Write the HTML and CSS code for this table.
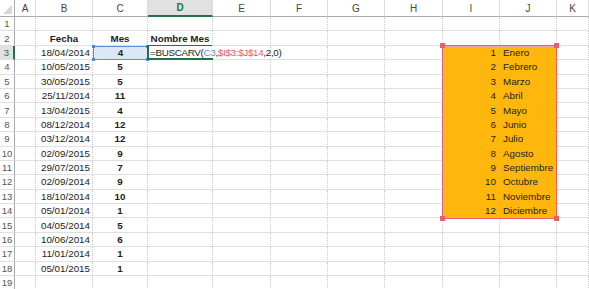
FILE: index.html
```html
<!DOCTYPE html>
<html lang="es">
<head>
<meta charset="utf-8">
<title>BUSCARV</title>
<link rel="stylesheet" href="styles.css">
</head>
<body>
<div class="sheet">
  <div class="c h corner"><svg class="tri" width="9" height="9" viewBox="0 0 9 9"><polygon points="9,0 9,9 0,9" fill="#d6d6d6"/></svg></div>
  <div class="c h">A</div><div class="c h">B</div><div class="c h">C</div><div class="c h hsel">D</div><div class="c h">E</div><div class="c h">F</div><div class="c h">G</div><div class="c h">H</div><div class="c h">I</div><div class="c h">J</div><div class="c h">K</div>

  <div class="c r">1</div><div class="c"></div><div class="c"></div><div class="c"></div><div class="c"></div><div class="c"></div><div class="c"></div><div class="c"></div><div class="c"></div><div class="c"></div><div class="c"></div><div class="c"></div>

  <div class="c r">2</div><div class="c"></div><div class="c ct b">Fecha</div><div class="c ct b">Mes</div><div class="c ct b">Nombre Mes</div><div class="c"></div><div class="c"></div><div class="c"></div><div class="c"></div><div class="c"></div><div class="c"></div><div class="c"></div>

  <div class="c r rsel">3</div><div class="c"></div><div class="c rt">18/04/2014</div><div class="c ct b sel">4<i class="hd tl"></i><i class="hd tr"></i><i class="hd bl"></i><i class="hd br"></i></div><div class="c f"><span class="ftext">=BUSCARV(<span class="ref1">C3</span>,<span class="ref2">$I$3:$J$14</span>,2,0)</span><span class="cursor"></span><i class="fh"></i></div><div class="c"></div><div class="c"></div><div class="c"></div><div class="c"></div><div class="c o rt">1</div><div class="c o">Enero</div><div class="c"></div>

  <div class="c r">4</div><div class="c"></div><div class="c rt">10/05/2015</div><div class="c ct b">5</div><div class="c"></div><div class="c"></div><div class="c"></div><div class="c"></div><div class="c"></div><div class="c o rt">2</div><div class="c o">Febrero</div><div class="c"></div>

  <div class="c r">5</div><div class="c"></div><div class="c rt">30/05/2015</div><div class="c ct b">5</div><div class="c"></div><div class="c"></div><div class="c"></div><div class="c"></div><div class="c"></div><div class="c o rt">3</div><div class="c o">Marzo</div><div class="c"></div>

  <div class="c r">6</div><div class="c"></div><div class="c rt">25/11/2014</div><div class="c ct b">11</div><div class="c"></div><div class="c"></div><div class="c"></div><div class="c"></div><div class="c"></div><div class="c o rt">4</div><div class="c o">Abril</div><div class="c"></div>

  <div class="c r">7</div><div class="c"></div><div class="c rt">13/04/2015</div><div class="c ct b">4</div><div class="c"></div><div class="c"></div><div class="c"></div><div class="c"></div><div class="c"></div><div class="c o rt">5</div><div class="c o">Mayo</div><div class="c"></div>

  <div class="c r">8</div><div class="c"></div><div class="c rt">08/12/2014</div><div class="c ct b">12</div><div class="c"></div><div class="c"></div><div class="c"></div><div class="c"></div><div class="c"></div><div class="c o rt">6</div><div class="c o">Junio</div><div class="c"></div>

  <div class="c r">9</div><div class="c"></div><div class="c rt">03/12/2014</div><div class="c ct b">12</div><div class="c"></div><div class="c"></div><div class="c"></div><div class="c"></div><div class="c"></div><div class="c o rt">7</div><div class="c o">Julio</div><div class="c"></div>

  <div class="c r">10</div><div class="c"></div><div class="c rt">02/09/2015</div><div class="c ct b">9</div><div class="c"></div><div class="c"></div><div class="c"></div><div class="c"></div><div class="c"></div><div class="c o rt">8</div><div class="c o">Agosto</div><div class="c"></div>

  <div class="c r">11</div><div class="c"></div><div class="c rt">29/07/2015</div><div class="c ct b">7</div><div class="c"></div><div class="c"></div><div class="c"></div><div class="c"></div><div class="c"></div><div class="c o rt">9</div><div class="c o">Septiembre</div><div class="c"></div>

  <div class="c r">12</div><div class="c"></div><div class="c rt">02/09/2014</div><div class="c ct b">9</div><div class="c"></div><div class="c"></div><div class="c"></div><div class="c"></div><div class="c"></div><div class="c o rt">10</div><div class="c o">Octubre</div><div class="c"></div>

  <div class="c r">13</div><div class="c"></div><div class="c rt">18/10/2014</div><div class="c ct b">10</div><div class="c"></div><div class="c"></div><div class="c"></div><div class="c"></div><div class="c"></div><div class="c o rt">11</div><div class="c o">Noviembre</div><div class="c"></div>

  <div class="c r">14</div><div class="c"></div><div class="c rt">05/01/2014</div><div class="c ct b">1</div><div class="c"></div><div class="c"></div><div class="c"></div><div class="c"></div><div class="c"></div><div class="c o rt">12</div><div class="c o">Diciembre</div><div class="c"></div>

  <div class="c r">15</div><div class="c"></div><div class="c rt">04/05/2014</div><div class="c ct b">5</div><div class="c"></div><div class="c"></div><div class="c"></div><div class="c"></div><div class="c"></div><div class="c"></div><div class="c"></div><div class="c"></div>

  <div class="c r">16</div><div class="c"></div><div class="c rt">10/06/2014</div><div class="c ct b">6</div><div class="c"></div><div class="c"></div><div class="c"></div><div class="c"></div><div class="c"></div><div class="c"></div><div class="c"></div><div class="c"></div>

  <div class="c r">17</div><div class="c"></div><div class="c rt">11/01/2014</div><div class="c ct b">1</div><div class="c"></div><div class="c"></div><div class="c"></div><div class="c"></div><div class="c"></div><div class="c"></div><div class="c"></div><div class="c"></div>

  <div class="c r">18</div><div class="c"></div><div class="c rt">05/01/2015</div><div class="c ct b">1</div><div class="c"></div><div class="c"></div><div class="c"></div><div class="c"></div><div class="c"></div><div class="c"></div><div class="c"></div><div class="c"></div>

  <div class="c r">19</div><div class="c"></div><div class="c"></div><div class="c"></div><div class="c"></div><div class="c"></div><div class="c"></div><div class="c"></div><div class="c"></div><div class="c"></div><div class="c"></div><div class="c"></div>

  <div class="range"><i class="rh tl"></i><i class="rh tr"></i><i class="rh bl"></i><i class="rh br"></i></div>
</div>
</body>
</html>
```
FILE: styles.css
```css
body {
  margin: 0;
  background: #fff;
  font-family: "Liberation Sans", Arial, sans-serif;
  font-size: 9.8px;
  color: #222;
}

.sheet {
  position: relative;
  display: grid;
  grid-template-columns: 15px 21px 57px 55px 65px 58px 57px 57px 58px 57px 57px 32px;
  grid-template-rows: 17px repeat(19, 14.4px);
  width: 589px;
  height: 289px;
  overflow: hidden;
}

.c {
  box-sizing: border-box;
  display: flex;
  align-items: center;
  min-width: 0;
  padding: 0 2px;
  white-space: nowrap;
  border-right: 1px dotted #cccccc;
  border-bottom: 1px solid #e0e0e0;
}

.h {
  justify-content: center;
  color: #444;
  font-size: 10px;
  border-bottom: 1px solid #ababab;
  border-right: 1px solid #dcdcdc;
  background: #fff;
}

.corner {
  position: relative;
  border-right: 1px solid #ababab;
}

.tri {
  position: absolute;
  right: 2px;
  bottom: 2px;
}

.hsel {
  background: #e1e1e1;
  color: #217346;
  font-weight: bold;
  border-bottom: 2px solid #217346;
}

.r {
  justify-content: center;
  padding: 0;
  color: #555;
  font-size: 9.5px;
  border-right: 1px solid #ababab;
  border-bottom: 1px solid #e0e0e0;
}

.rsel {
  background: #e1e1e1;
  color: #217346;
  border-right: 2px solid #217346;
}

.rt { justify-content: flex-end; }
.ct { justify-content: center; }
.b { font-weight: bold; }

.sel {
  position: relative;
  background: #dde7f5;
  border: 1px solid #5a8fd8;
}

.hd {
  position: absolute;
  width: 3px;
  height: 3px;
  background: #4f86d3;
}

.hd.tl { left: -2px; top: -2px; }
.hd.tr { right: -2px; top: -2px; }
.hd.bl { left: -2px; bottom: -2px; }
.hd.br { right: -2px; bottom: -2px; }

.f {
  position: relative;
  z-index: 2;
  overflow: visible;
  padding-left: 2px;
  border-right-color: transparent;
}

.f::before {
  content: "";
  position: absolute;
  z-index: -1;
  inset: -1px 0 -1px -1px;
  border: 2px solid #217346;
  border-top-width: 1px;
  border-right-width: 0;
}

.fh {
  position: absolute;
  right: -1px;
  bottom: -1px;
  width: 2px;
  height: 2px;
  background: #217346;
}

.ftext {
  letter-spacing: -0.3px;
}

.ref1 { color: #5a8fd8; }
.ref2 { color: #e45a66; }

.cursor {
  display: inline-block;
  width: 1px;
  height: 11px;
  margin-left: 1px;
  background: #222;
}

.o {
  background: #ffb60d;
  border-right-color: #ffb60d;
  border-bottom-color: #ffb60d;
  padding: 0 3px;
}

.range {
  position: absolute;
  grid-column: 10 / 12;
  grid-row: 4 / 16;
  inset: -1px 0 -1px -1px;
  border: 1px solid #e2616f;
  box-shadow: inset 0 0 0 1px #f5a3a6;
  pointer-events: none;
}

.rh {
  position: absolute;
  width: 5px;
  height: 5px;
  background: #e2616f;
}

.rh.tl { left: -3px; top: -3px; }
.rh.tr { right: -3px; top: -3px; }
.rh.bl { left: -3px; bottom: -3px; }
.rh.br { right: -3px; bottom: -3px; }
```
